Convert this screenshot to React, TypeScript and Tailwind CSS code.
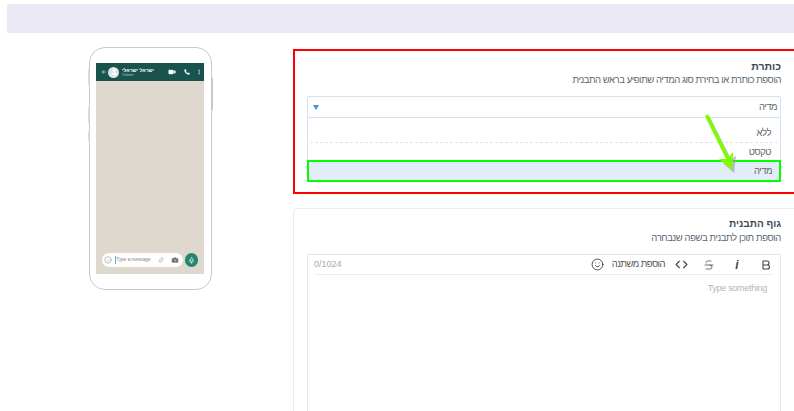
import { Bold, Camera, Code, Mic, Paperclip, Phone, Smile, Strikethrough, Video, ArrowLeft, EllipsisVertical, User } from "lucide-react";

function PhonePreview() {
  return (
    <div className="relative w-[123px] h-[243px] rounded-[16px] border border-[#c3cccb] bg-white pt-[15px] px-[6px]">
      {/* Side buttons */}
      <div className="absolute left-[-2px] top-[21px] w-[2px] h-[16px] bg-[#d5dbda]" />
      <div className="absolute left-[-2px] top-[59px] w-[2px] h-[16px] bg-[#d5dbda]" />
      <div className="absolute left-[-2px] top-[84px] w-[2px] h-[9px] bg-[#d5dbda]" />
      <div className="absolute right-[-2px] top-[30px] w-[2px] h-[32px] bg-[#c3cccb]" />

      <div className="w-[108px] h-[211px] bg-[#ded8ce] flex flex-col">
        {/* Chat header */}
        <div className="h-[18px] bg-[#18534e] flex items-center text-white pl-[5px] pr-[2px]">
          <ArrowLeft size={6} strokeWidth={2} />
          <div className="ml-[1px] w-[11px] h-[11px] rounded-full bg-[#dfe5e5] flex items-center justify-center">
            <User size={8} className="text-white" fill="white" />
          </div>
          <div className="ml-[3px] flex flex-col leading-none">
            <span dir="rtl" className="text-[5px] font-bold">ישראל ישראלי</span>
            <span className="text-[4px] text-[#b9d0cd]">Online</span>
          </div>
          <Video size={8} fill="white" strokeWidth={1} className="ml-auto" />
          <Phone size={6} fill="white" strokeWidth={1} className="ml-[8px]" />
          <EllipsisVertical size={6} strokeWidth={2} className="ml-[6px]" />
        </div>

        {/* Message bar */}
        <div className="mt-auto mb-[7px] flex items-center px-[6px] gap-[2px]">
          <div className="w-[84px] h-[14px] rounded-full bg-white flex items-center px-[2px] text-[#8a8a8a]">
            <Smile size={8} strokeWidth={1.5} />
            <div className="ml-[3px] w-[1px] h-[8px] bg-[#5fb4d8]" />
            <span className="text-[5px] tracking-[-0.15px] text-[#8a8a8a] whitespace-nowrap">Type a message</span>
            <Paperclip size={6} className="ml-auto" strokeWidth={1.5} />
            <Camera size={8} className="ml-[7px] mr-[2px] text-[#666]" fill="#666" stroke="white" strokeWidth={1} />
          </div>
          <div className="w-[14px] h-[14px] rounded-full bg-[#23866f] flex items-center justify-center text-white">
            <Mic size={7} strokeWidth={2} />
          </div>
        </div>
      </div>
    </div>
  );
}

function HeaderCard() {
  return (
    <div className="relative h-[145px] border-[2px] border-[#ff0000] pt-[8px] pl-[12px]">
      <div dir="rtl" className="w-[474px] text-right">
        <div className="text-[10.5px] leading-[14px] font-bold text-[#3f4a56]">כותרת</div>
        <div className="text-[9.5px] tracking-[-0.45px] leading-[14px] text-[#5b6670]">הוספת כותרת או בחירת סוג המדיה שתופיע בראש התבנית</div>
      </div>
      <div className="mt-[9px] h-[22px] w-[474px] rounded-t-[2px] border border-[#d3e2f0] flex items-center justify-between pl-[5px] pr-[3px]">
        <span className="w-0 h-0 border-x-[3.5px] border-x-transparent border-t-[5px] border-t-[#4a90d9]" />
        <span dir="rtl" className="text-[9.5px] tracking-[-0.5px] text-[#666]">מדיה</span>
      </div>
      <div className="w-[474px] border-x border-[#d3e2f0]" dir="rtl">
        <div className="h-[24px] pr-[9px] pt-[8px] text-[9.5px] tracking-[-0.5px] leading-[14px] text-[#666]">ללא</div>
        <div className="mx-[2px] border-t border-dashed border-[#e4e4e4]" />
        <div className="h-[17px] pr-[9px] pt-[2px] text-[9.5px] tracking-[-0.5px] leading-[14px] text-[#666]">טקסט</div>
      </div>
      <div dir="rtl" className="w-[474px] h-[22px] border-[2px] border-[#00ff00] bg-[#e3edf7] pr-[7px] text-[9.5px] tracking-[-0.5px] leading-[17px] text-[#666]">מדיה</div>

      {/* Annotation arrow */}
      <svg className="absolute left-[407px] top-[63px]" width="36" height="62" viewBox="0 0 36 62" fill="none">
        <path d="M4 3 L25 46 L20 48 L31 58 L33 41 L28 44 L7 2 Z" fill="#999" opacity="0.6" transform="translate(1 1)" />
        <path d="M3 2 L24 45 L17 45 L30 56 L31 38 L27 43 L6 0 Z" fill="#7cfc00" />
      </svg>
    </div>
  );
}

function BodyCard() {
  return (
    <div className="mt-[14px] h-[210px] rounded-tl-[3px] border border-[#ececec] pt-[8px] pl-[13px]">
      <div dir="rtl" className="w-[474px] text-right">
        <div className="text-[10px] leading-[14px] font-bold text-[#3f4a56]">גוף התבנית</div>
        <div className="text-[9.5px] tracking-[-0.4px] leading-[14px] text-[#5b6670]">הוספת תוכן לתבנית בשפה שנבחרה</div>
      </div>
      <div className="mt-[9px] w-[474px] h-[160px] rounded-t-[2px] border border-[#e6e6e6] px-[6px]">
        <div className="h-[20px] border-b border-[#eeeeee] flex items-center justify-between">
          <span className="text-[9px] text-[#a8a8a8]">0/1024</span>
          <div className="flex items-center text-[#444]">
            <Smile size={13} strokeWidth={1.75} className="mr-[8px]" />
            <span dir="rtl" className="text-[9.5px] tracking-[-0.55px] text-[#555] mr-[10px]">הוספת משתנה</span>
            <Code size={13} strokeWidth={2} className="mr-[15px]" />
            <Strikethrough size={12} strokeWidth={1.5} className="mr-[17px]" />
            <span className="w-[10px] text-center text-[12px] italic font-bold mr-[18px]">i</span>
            <Bold size={12} strokeWidth={2.25} className="mr-[2px]" />
          </div>
        </div>
        <div className="pt-[7px] pr-[7px] text-right text-[9px] tracking-[-0.3px] text-[#b5b5b5]">Type something</div>
      </div>
    </div>
  );
}

export default function App() {
  return (
    <div className="w-[794px] h-[411px] overflow-hidden bg-white pt-[4px] font-['Liberation_Sans',sans-serif]">
      <div className="ml-[7px] h-[29px] bg-[#ebe9f5]" />
      <div className="flex">
        <div className="ml-[89px] mt-[14px]">
          <PhonePreview />
        </div>
        <div className="ml-[81px] mt-[16px] w-[510px] shrink-0">
          <HeaderCard />
          <BodyCard />
        </div>
      </div>
    </div>
  );
}
